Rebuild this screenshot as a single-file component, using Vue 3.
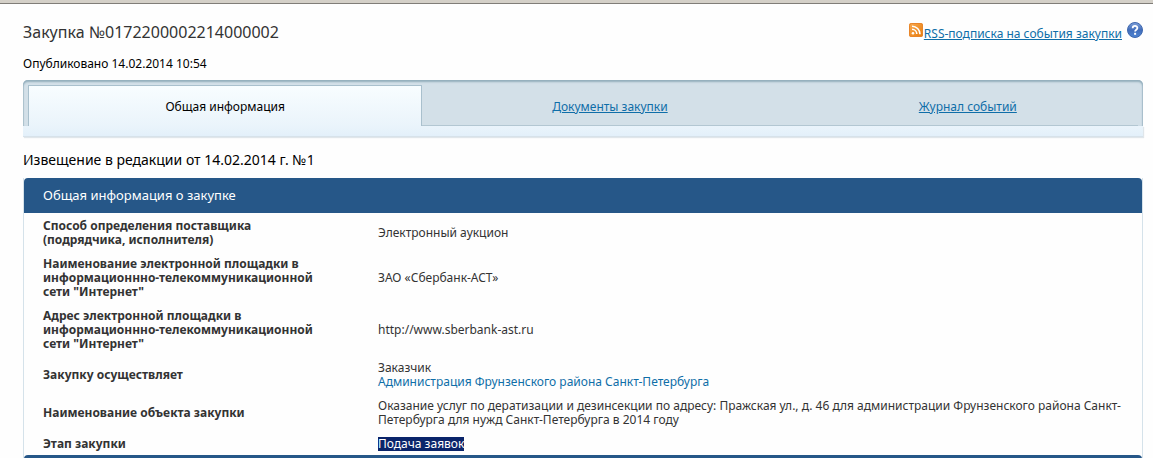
<script setup>
const tabs = [
  { label: 'Документы закупки', kind: 'documents' },
  { label: 'Журнал событий', kind: 'journal' }
]

const rows = [
  { label: 'Способ определения поставщика (подрядчика, исполнителя)', value: 'Электронный аукцион' },
  { label: 'Наименование электронной площадки в информационнно-телекоммуникационной сети "Интернет"', value: 'ЗАО «Сбербанк-АСТ»' },
  { label: 'Адрес электронной площадки в информационнно-телекоммуникационной сети "Интернет"', value: 'http://www.sberbank-ast.ru' },
  { label: 'Закупку осуществляет', value: 'Заказчик', link: 'Администрация Фрунзенского района Санкт-Петербурга' },
  { label: 'Наименование объекта закупки', value: 'Оказание услуг по дератизации и дезинсекции по адресу: Пражская ул., д. 46 для администрации Фрунзенского района Санкт-Петербурга для нужд Санкт-Петербурга в 2014 году' },
  { label: 'Этап закупки', value: 'Подача заявок', selected: true }
]
</script>

<template>
  <div class="page">
    <header class="top">
      <div class="heading">
        <h1>Закупка №0172200002214000002</h1>
        <p>Опубликовано 14.02.2014 10:54</p>
      </div>
      <div class="tools">
        <svg class="rss" viewBox="0 0 14 14" aria-hidden="true">
          <defs>
            <linearGradient id="rssFill" x1="0" y1="0" x2="1" y2="1">
              <stop offset="0" stop-color="#f8ac55" />
              <stop offset="1" stop-color="#e87a08" />
            </linearGradient>
          </defs>
          <rect width="14" height="14" rx="2" fill="url(#rssFill)" />
          <rect x="0.5" y="0.5" width="13" height="13" rx="2" fill="none" stroke="#e8852a" />
          <circle cx="4" cy="10.2" r="1.3" fill="#fff" />
          <path d="M3 6.3a4.8 4.8 0 0 1 4.8 4.8M3 3.2a8 8 0 0 1 8 8" fill="none" stroke="#fff" stroke-width="1.6" />
        </svg>
        <a class="rss-link" href="#rss">RSS-подписка на события закупки</a>
        <button class="help" type="button" aria-label="Справка">
          <svg viewBox="0 0 16 16" aria-hidden="true">
            <defs>
              <linearGradient id="helpFill" x1="0" y1="0" x2="0" y2="1">
                <stop offset="0" stop-color="#7fa0d8" />
                <stop offset="0.5" stop-color="#416dbb" />
                <stop offset="1" stop-color="#4f86d4" />
              </linearGradient>
            </defs>
            <circle cx="8" cy="8" r="7.5" fill="url(#helpFill)" stroke="#3f68ae" />
            <path d="M5.7 6.2c0-3 4.7-3 4.7-.2 0 1.7-2.3 1.7-2.3 3.5" fill="none" stroke="#fff" stroke-width="1.8" />
            <rect x="7.1" y="10.8" width="2" height="2" fill="#fff" />
          </svg>
        </button>
      </div>
    </header>

    <nav class="tabs">
      <div class="tab-row">
        <span class="tab active">Общая информация</span>
        <span v-for="tab in tabs" :key="tab.kind" class="tab" :class="tab.kind">
          <a :href="'#' + tab.kind">{{ tab.label }}</a>
        </span>
      </div>
      <div class="tab-base"></div>
    </nav>

    <p class="edition">Извещение в редакции от 14.02.2014 г. №1</p>

    <section class="panel">
      <h2>Общая информация о закупке</h2>
      <table>
        <tbody>
          <tr v-for="row in rows" :key="row.label">
            <th scope="row">{{ row.label }}</th>
            <td>
              <mark v-if="row.selected">{{ row.value }}</mark>
              <div v-else>{{ row.value }}</div>
              <a v-if="row.link" href="#customer">{{ row.link }}</a>
            </td>
          </tr>
        </tbody>
      </table>
      <div class="next"></div>
    </section>
  </div>
</template>

<style>
body {
  background: #fefefe;
  overflow: hidden;
}
</style>

<style scoped>
.page {
  padding: 0 10px 0 23px;
  border-top: 3px solid #d4d0c8;
  box-shadow: inset 0 1px #807d78;
  font-family: "Noto Sans", "DejaVu Sans", sans-serif;
  font-size: 12px;
  line-height: 14px;
  color: #333;
}
h1,
h2,
p {
  margin: 0;
  font-weight: 400;
}
a {
  color: #0f6ea8;
}
.top {
  display: flex;
  justify-content: space-between;
  height: 77px;
}
.heading h1 {
  padding-top: 19px;
  font-size: 16px;
  line-height: 20px;
}
.heading p {
  padding-top: 15px;
  color: #000;
}
.tools {
  display: flex;
  align-items: flex-start;
  padding-top: 19px;
}
.rss {
  width: 14px;
  height: 14px;
  margin: 1px 1px 0;
}
.rss-link {
  margin-top: 5px;
}
.help {
  width: 16px;
  height: 16px;
  margin-left: 5px;
  padding: 0;
  border: 0;
  background: none;
}
.help svg {
  display: block;
}
.tab-row {
  display: flex;
  height: 46px;
  box-sizing: border-box;
  padding: 5px 5px 0;
  border-radius: 5px 5px 0 0;
  background: #d3e0e8;
  box-shadow: inset 0 2px 2px #93aebc, inset -1px 0 1px #adc3d0, inset 1px 0 #b6cad6;
}
.tab {
  display: flex;
  flex: 376 1 0;
  align-items: center;
  justify-content: center;
  box-sizing: border-box;
  padding-top: 3px;
  border-bottom: 1px solid #b3c7d2;
}
.tab.active {
  flex-grow: 393;
  padding-top: 2px;
  border: 1px solid #a9c0cd;
  border-bottom: 0;
  background: linear-gradient(#f8fdff, #eaf4fb);
  color: #000;
}
.tab.journal {
  flex-grow: 341;
}
.tab-base {
  height: 11px;
  box-sizing: border-box;
  border-bottom: 1px solid #d7e2ea;
  background: linear-gradient(#eaf4fb, #e3f0fa);
  box-shadow: 1px 1px 1px #e0e6ea;
}
.edition {
  padding: 14px 0 9px;
  font-size: 14px;
  line-height: 18px;
  color: #000;
}
.panel {
  border: solid #d5e2ea;
  border-width: 0 1px;
}
.panel h2 {
  padding: 8px 19px;
  border-radius: 4px 4px 0 0;
  background: #265788;
  font-size: 13px;
  line-height: 19px;
  color: #fff;
}
table {
  width: 100%;
  border-collapse: collapse;
  table-layout: fixed;
}
th,
td {
  padding: 6px 20px 4px 19px;
  text-align: left;
  vertical-align: middle;
}
th {
  width: 272px;
  padding-right: 44px;
}
td a {
  display: block;
  text-decoration: none;
}
mark {
  display: inline-block;
  background: #0a246a;
  color: #fff;
}
.next {
  height: 8px;
  border-radius: 4px 4px 0 0;
  background: #265788;
}
</style>
